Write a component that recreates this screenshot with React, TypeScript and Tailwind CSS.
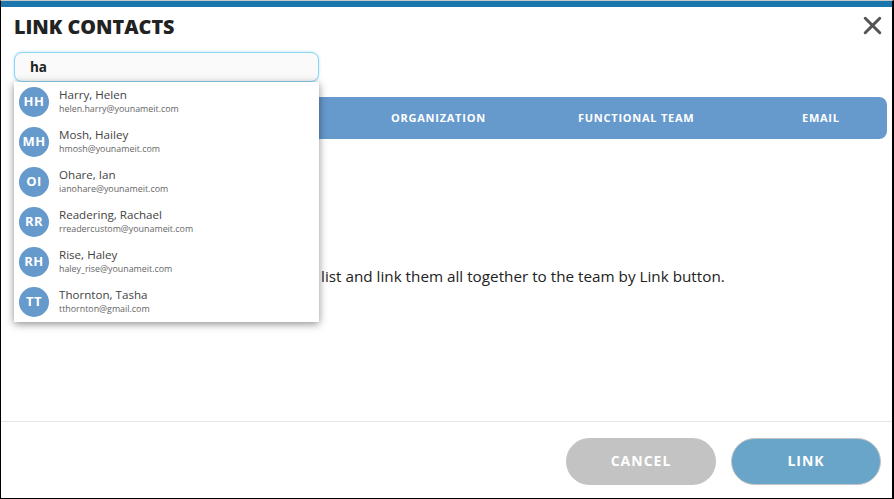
import React from 'react';
import { X } from 'lucide-react';

const contacts = [
  { initials: 'HH', name: 'Harry, Helen', email: 'helen.harry@younameit.com' },
  { initials: 'MH', name: 'Mosh, Hailey', email: 'hmosh@younameit.com' },
  { initials: 'OI', name: 'Ohare, Ian', email: 'ianohare@younameit.com' },
  { initials: 'RR', name: 'Readering, Rachael', email: 'rreadercustom@younameit.com' },
  { initials: 'RH', name: 'Rise, Haley', email: 'haley_rise@younameit.com' },
  { initials: 'TT', name: 'Thornton, Tasha', email: 'tthornton@gmail.com' },
];

export default function App() {
  return (
    <div className="h-[499px] w-[894px] flex flex-col bg-white border-l border-r-2 border-b border-black border-t border-t-[#c8c8c8] overflow-hidden font-['Open_Sans',sans-serif] text-[#222]">
      <div className="h-[6px] shrink-0 bg-[#1a76ad]" />

      <div className="flex-1 flex flex-col pl-[13px] pr-[5px] min-h-0">
        <div className="flex items-start justify-between h-[45px] shrink-0">
          <h1 className="mt-[6px] text-[19.75px] leading-[28px] font-extrabold">LINK CONTACTS</h1>
          <button className="mt-[4px] text-[#555]">
            <X size={29} strokeWidth={2.5} />
          </button>
        </div>

        <div className="relative w-[305px] shrink-0">
          <div className="h-[30px] flex items-center pl-[15px] rounded-[8px] border border-[#8fd6f5] bg-[#fafafa] shadow-[0_0_3px_#a9e3fb] text-[13.5px] font-bold">
            ha
          </div>
          <ul className="absolute z-10 top-[30px] left-0 w-[305px] h-[240px] bg-white shadow-[0_2px_8px_rgba(0,0,0,0.45)]">
            {contacts.map((c) => (
              <li key={c.email} className="h-[40px] flex items-center pl-[5px]">
                <div className="w-[30px] h-[30px] shrink-0 rounded-full bg-[#6699cc] text-white text-[13px] font-bold tracking-[0.5px] flex items-center justify-center">
                  {c.initials}
                </div>
                <div className="ml-[10px] mb-[3px] flex flex-col">
                  <span className="text-[11.6px] leading-[15px] text-[#444]">{c.name}</span>
                  <span className="text-[8.9px] leading-[13px] text-[#666]">{c.email}</span>
                </div>
              </li>
            ))}
          </ul>
        </div>

        <div className="mt-[15px] h-[42px] shrink-0 rounded-[8px] bg-[#6699cc] flex items-center text-white text-[11px] font-bold tracking-[0.75px]">
          <span className="ml-[377px] w-[187px]">ORGANIZATION</span>
          <span className="w-[224px]">FUNCTIONAL TEAM</span>
          <span>EMAIL</span>
        </div>

        <p className="mt-[127px] text-[15.25px] leading-[20px] text-center pr-[17px]">
          Add contacts from the list and link them all together to the team by Link button.
        </p>
      </div>

      <div className="h-[77px] shrink-0 border-t border-[#e5e5e5] flex items-start justify-end gap-[15px] pt-[16px] pr-[11px]">
        <button className="w-[150px] h-[47px] pb-[2px] rounded-full bg-[#c3c3c3] text-white text-[14px] font-bold tracking-[1px]">
          CANCEL
        </button>
        <button className="w-[150px] h-[47px] pb-[2px] rounded-full bg-[#68a5c9] border border-[#c3c3c3] text-white text-[14px] font-bold tracking-[1px]">
          LINK
        </button>
      </div>
    </div>
  );
}
